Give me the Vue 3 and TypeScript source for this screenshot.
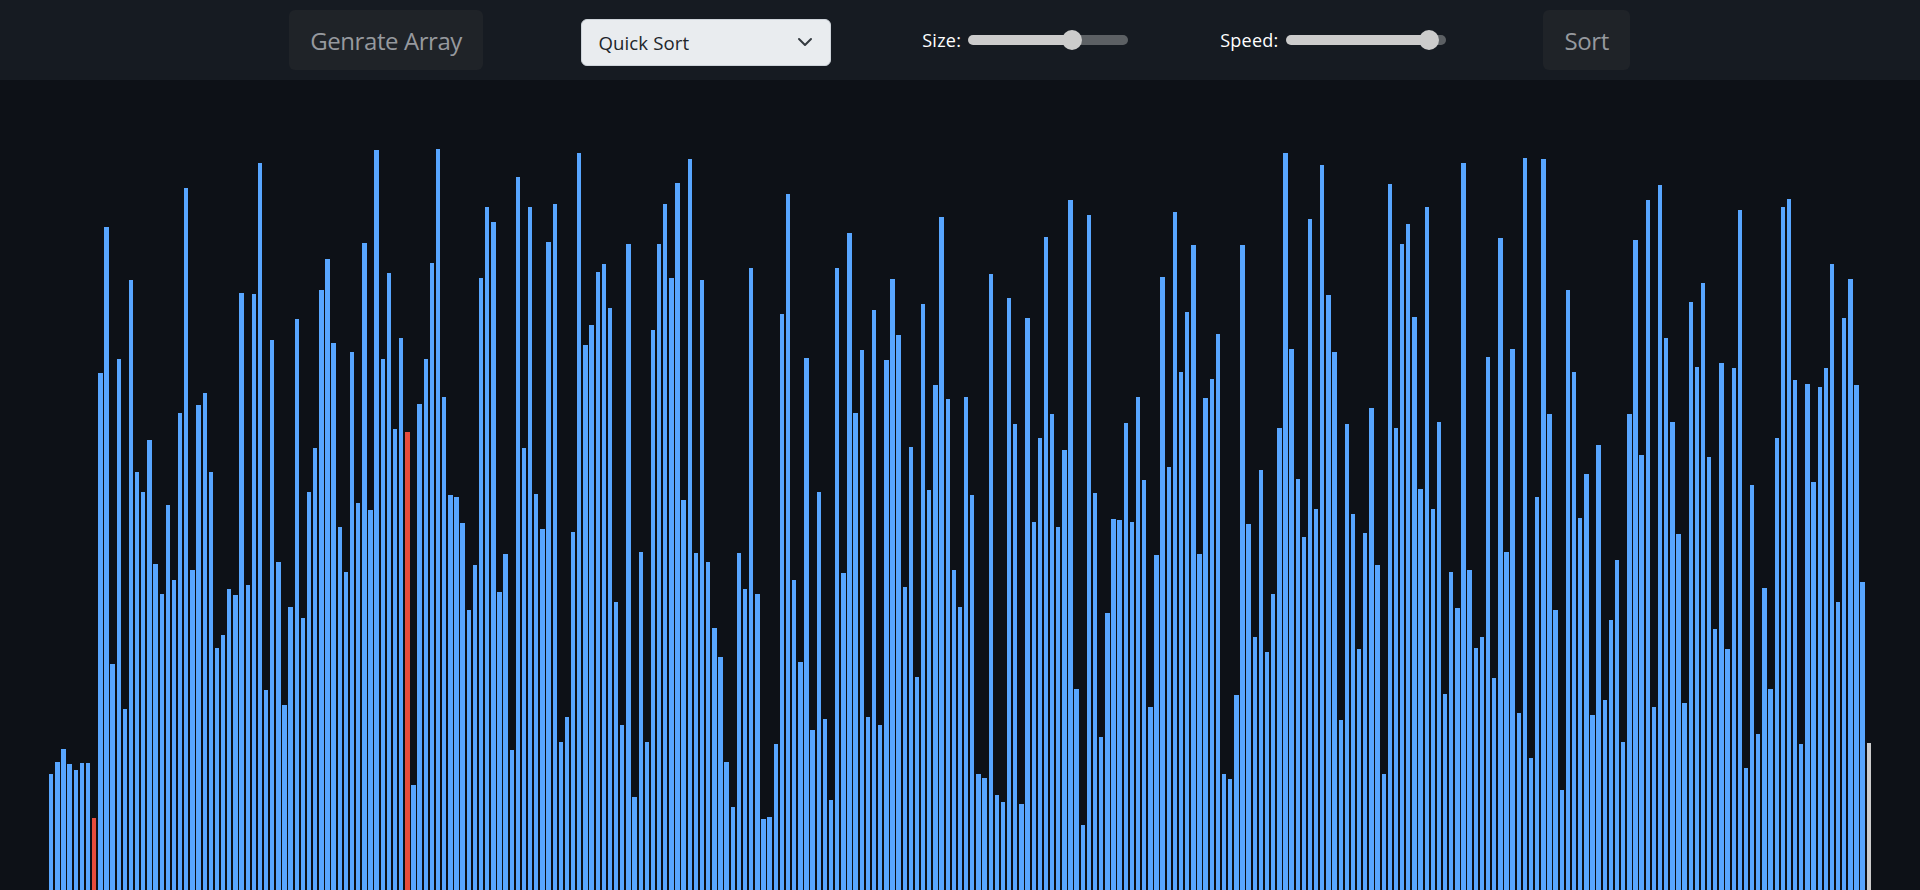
<script setup lang="ts">
import { computed, ref } from 'vue'

// bar tops as sampled from the chart, on a 0-1568 scale over the lower 760px
const samples: number[] = [
  1329, 1304, 1277, 1308, 1320, 1306, 1306, 1419, 501, 200, 1102, 472, 1195, 309, 706, 747, 640, 895, 957, 774,
  928, 584, 120, 908, 567, 543, 706, 1069, 1042, 947, 959, 336, 939, 338, 68, 1155, 433, 891, 1186, 984,
  390, 1007, 747, 656, 330, 266, 439, 819, 912, 458, 770, 233, 784, 41, 472, 295, 617, 429, 623, 1351,
  565, 472, 274, 39, 551, 753, 757, 811, 990, 897, 305, 159, 190, 953, 875, 1279, 97, 656, 159, 751,
  823, 231, 153, 1263, 1211, 829, 47, 444, 402, 293, 276, 367, 974, 1228, 235, 1376, 871, 1263, 413, 235,
  153, 305, 109, 763, 60, 873, 309, 891, 1027, 1087, 1304, 1397, 873, 947, 285, 957, 1422, 1417, 1267, 380,
  132, 928, 1098, 470, 1238, 747, 1215, 1382, 285, 914, 213, 584, 454, 1211, 371, 1228, 475, 307, 423, 943,
  654, 1129, 359, 743, 526, 179, 555, 908, 984, 551, 753, 1329, 1337, 297, 1372, 1386, 347, 607, 1391, 388,
  809, 635, 221, 586, 819, 660, 144, 1153, 1434, 175, 749, 1252, 997, 803, 805, 605, 809, 551, 722, 1190,
  877, 303, 695, 169, 499, 375, 237, 875, 553, 514, 421, 1329, 1339, 1166, 237, 813, 1046, 701, 1077, 957,
  615, 47, 452, 720, 840, 184, 782, 72, 340, 458, 1217, 607, 792, 1071, 831, 574, 897, 1329, 111, 615,
  235, 194, 386, 741, 159, 782, 602, 1164, 912, 986, 68, 908, 1069, 1046, 468, 1131, 223, 871, 452, 1203,
  58, 1296, 757, 60, 586, 990, 1362, 330, 499, 801, 710, 1207, 650, 1176, 1011, 887, 1263, 586, 227, 671,
  144, 1190, 113, 429, 602, 834, 1182, 355, 489, 316, 675, 1030, 481, 1071, 491, 165, 1316, 732, 1246, 945,
  1153, 635, 159, 142, 516, 1267, 524, 726, 530, 491, 276, 974, 388, 307, 526, 933, 1265,
]

const size = ref(297)
const speed = ref(95)
const algorithm = ref('quick')

const bars = computed(() =>
  samples.map((top, i) => ({
    height: Math.round(760 - (top * 760) / 1568),
    state: i === 7 || i === 58 ? 'pivot' : i === samples.length - 1 ? 'done' : '',
  })),
)

const sizeFill = computed(() => fillOf(size.value, 10, 440))
const speedFill = computed(() => fillOf(speed.value, 0, 100))

function fillOf(value: number, min: number, max: number): string {
  const ratio = (value - min) / (max - min)
  return `${10 + ratio * 140}px`
}
</script>

<template>
  <div class="page">
    <header class="topbar">
      <button class="action" type="button" disabled>Genrate Array</button>

      <div class="select_wrap">
        <select v-model="algorithm" class="algo_select">
          <option value="quick">Quick Sort</option>
          <option value="merge">Merge Sort</option>
          <option value="heap">Heap Sort</option>
          <option value="bubble">Bubble Sort</option>
        </select>
        <svg class="chevron" viewBox="0 0 16 16" width="16" height="16">
          <path d="m2 5 6 6 6-6" fill="none" stroke="#343a40" stroke-width="2" stroke-linecap="round" stroke-linejoin="round" />
        </svg>
      </div>

      <label class="range_group size_group">
        <span>Size:</span>
        <input v-model.number="size" class="slider" type="range" min="10" max="440" :style="{ '--fill': sizeFill }" />
      </label>

      <label class="range_group">
        <span>Speed:</span>
        <input v-model.number="speed" class="slider" type="range" min="0" max="100" :style="{ '--fill': speedFill }" />
      </label>

      <button class="action sort_action" type="button" disabled>Sort</button>
    </header>

    <main class="chart">
      <div
        v-for="(bar, i) in bars"
        :key="i"
        class="bar"
        :class="bar.state"
        :style="{ height: bar.height + 'px' }"
      ></div>
    </main>
  </div>
</template>

<style>
html,
body {
  margin: 0;
  background: #0d1117;
}
</style>

<style scoped>
.page {
  height: 890px;
  display: flex;
  flex-direction: column;
  overflow: hidden;
  background: #0d1117;
  font-family: "Open Sans", "Noto Sans", sans-serif;
}

/* 顶部工具栏 */
.topbar {
  height: 80px;
  flex: none;
  display: flex;
  align-items: center;
  justify-content: center;
  gap: 92px;
  padding-right: 1px;
  background: #161b22;
}

.action {
  height: 60px;
  margin: 0 6px;
  padding: 0 21.5px;
  border: none;
  border-radius: 6px;
  background: #1f2328;
  color: #96999e;
  font-family: inherit;
  font-size: 24px;
  letter-spacing: -0.42px;
}

.sort_action {
  margin-left: 5.5px;
}

.select_wrap {
  position: relative;
  width: 250px;
  height: 47px;
  margin-top: 5px;
}

.algo_select {
  width: 100%;
  height: 100%;
  padding: 0 16px;
  border: 1px solid #ced4da;
  border-radius: 6px;
  appearance: none;
  background: #e9ecef;
  color: #212529;
  font-family: inherit;
  font-size: 18.6px;
  letter-spacing: 0.1px;
}

.chevron {
  position: absolute;
  top: 15px;
  right: 18px;
  pointer-events: none;
}

.range_group {
  display: flex;
  align-items: center;
  gap: 7px;
  color: #fff;
  font-size: 18px;
  letter-spacing: 0.25px;
}

.size_group {
  margin-left: -1.25px;
}

.slider {
  width: 160px;
  height: 20px;
  margin: 0;
  appearance: none;
  -webkit-appearance: none;
  background: transparent;
}

.slider::-webkit-slider-runnable-track {
  height: 10px;
  border-radius: 5px;
  background: linear-gradient(to right, #cccccc var(--fill), #5c6064 var(--fill));
}

.slider::-webkit-slider-thumb {
  -webkit-appearance: none;
  width: 20px;
  height: 20px;
  margin-top: -5px;
  border-radius: 50%;
  background: #cccccc;
}

/* 柱状图 */
.chart {
  flex: 1;
  width: 95%;
  margin: 0 auto;
  display: flex;
  align-items: flex-end;
}

.bar {
  flex: 1 1 0;
  margin: 0 0.77px 0 1px;
  background: #58a6ff;
}

.bar.pivot {
  background: #e74c3c;
}

.bar.done {
  background: #cccccc;
}
</style>
